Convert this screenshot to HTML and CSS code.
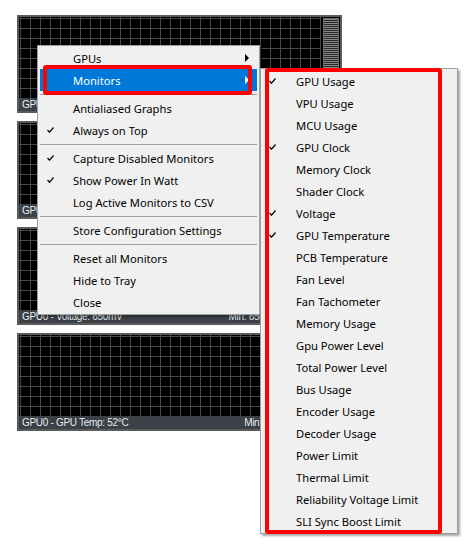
FILE: index.html
```html
<!DOCTYPE html>
<html>
<head>
<meta charset="utf-8">
<link rel="stylesheet" href="styles.css">
</head>
<body>
<div class="panels">
  <div class="panel">
    <div class="panel-body"><div class="grid"></div><div class="meter"></div></div>
    <div class="status"><span>GPU0 - GPU Usage: 0%</span><span>Min: 0%  Max: 0%</span></div>
  </div>
  <div class="panel">
    <div class="panel-body"><div class="grid"></div><div class="meter"></div></div>
    <div class="status"><span>GPU0 - GPU Clock: 300MHz</span><span>Min: 300MHz  Max: 300MHz</span></div>
  </div>
  <div class="panel">
    <div class="panel-body"><div class="grid"></div><div class="meter"></div></div>
    <div class="status"><span>GPU0 - Voltage: 650mV</span><span>Min: 650mV  Max: 650mV</span></div>
  </div>
  <div class="panel">
    <div class="panel-body"><div class="grid"></div><div class="meter"></div></div>
    <div class="status"><span>GPU0 - GPU Temp: 52°C</span><span>Min: 52°C  Max: 52°C </span></div>
  </div>
</div>

<div class="menu main-menu">
  <div class="item">GPUs<span class="arrow"></span></div>
  <div class="item active">Monitors<span class="arrow"></span></div>
  <div class="sep"></div>
  <div class="item">Antialiased Graphs</div>
  <div class="item"><svg class="check" viewBox="0 0 7 6"><path d="M0.5 3 L2.5 5.2 L6.5 0.5"/></svg>Always on Top</div>
  <div class="sep"></div>
  <div class="item"><svg class="check" viewBox="0 0 7 6"><path d="M0.5 3 L2.5 5.2 L6.5 0.5"/></svg>Capture Disabled Monitors</div>
  <div class="item"><svg class="check" viewBox="0 0 7 6"><path d="M0.5 3 L2.5 5.2 L6.5 0.5"/></svg>Show Power In Watt</div>
  <div class="item">Log Active Monitors to CSV</div>
  <div class="sep"></div>
  <div class="item">Store Configuration Settings</div>
  <div class="sep"></div>
  <div class="item">Reset all Monitors</div>
  <div class="item">Hide to Tray</div>
  <div class="item">Close</div>
</div>

<div class="menu sub-menu">
  <div class="item"><svg class="check" viewBox="0 0 7 6"><path d="M0.5 3 L2.5 5.2 L6.5 0.5"/></svg>GPU Usage</div>
  <div class="item">VPU Usage</div>
  <div class="item">MCU Usage</div>
  <div class="item"><svg class="check" viewBox="0 0 7 6"><path d="M0.5 3 L2.5 5.2 L6.5 0.5"/></svg>GPU Clock</div>
  <div class="item">Memory Clock</div>
  <div class="item">Shader Clock</div>
  <div class="item"><svg class="check" viewBox="0 0 7 6"><path d="M0.5 3 L2.5 5.2 L6.5 0.5"/></svg>Voltage</div>
  <div class="item"><svg class="check" viewBox="0 0 7 6"><path d="M0.5 3 L2.5 5.2 L6.5 0.5"/></svg>GPU Temperature</div>
  <div class="item">PCB Temperature</div>
  <div class="item">Fan Level</div>
  <div class="item">Fan Tachometer</div>
  <div class="item">Memory Usage</div>
  <div class="item">Gpu Power Level</div>
  <div class="item">Total Power Level</div>
  <div class="item">Bus Usage</div>
  <div class="item">Encoder Usage</div>
  <div class="item">Decoder Usage</div>
  <div class="item">Power Limit</div>
  <div class="item">Thermal Limit</div>
  <div class="item">Reliability Voltage Limit</div>
  <div class="item">SLI Sync Boost Limit</div>
</div>

<div class="mark mark-monitors"></div>
<div class="mark mark-sub"></div>
</body>
</html>
```

FILE: styles.css
```css
* { box-sizing: border-box; }
html, body { margin: 0; padding: 0; background: #ffffff; }
body {
  width: 467px;
  height: 553px;
  overflow: hidden;
  position: relative;
  font-family: "Noto Sans", sans-serif;
}

.panels {
  display: flex;
  flex-direction: column;
  gap: 8px;
  padding: 15px 0 0 17px;
}
.panel {
  width: 325px;
  height: 98px;
  border: 2px solid #5b5b5b;
  background: #000;
  display: flex;
  flex-direction: column;
}
.panel-body {
  flex: 1;
  display: flex;
  min-height: 0;
}
.grid {
  flex: 1;
  background-color: #000;
  background-image:
    linear-gradient(to right, #474747 1px, transparent 1px),
    linear-gradient(to bottom, #474747 1px, transparent 1px);
  background-size: 10px 10px;
  background-position: 1px 1px;
}
.meter {
  width: 16px;
  margin: 1px 1px 1px 2px;
  border: 1px solid #6a6a6a;
  background: repeating-linear-gradient(to bottom, #8a8a8a 0 1px, #262626 1px 2px);
}
.status {
  height: 13px;
  background: #3c4247;
  color: #f2f2f2;
  font-family: "Liberation Sans", Arial, sans-serif;
  font-size: 10px;
  letter-spacing: -0.3px;
  line-height: 13px;
  display: flex;
  justify-content: space-between;
  padding: 0 3px 0 3px;
  white-space: pre;
  text-shadow: 0 0 1px #1a2a3a;
}

.menu {
  position: absolute;
  background: #f0f0f0;
  border: 1px solid #a0a0a0;
  box-shadow: 2px 2px 2px rgba(0, 0, 0, 0.35);
  padding: 1px 2px;
  font-size: 11.2px;
  color: #000;
}
.main-menu { left: 37px; top: 45px; width: 223px; }
.sub-menu { left: 260px; top: 68px; width: 198px; }

.item {
  position: relative;
  height: 22px;
  line-height: 22px;
  padding-left: 33px;
  padding-top: 1px;
  white-space: nowrap;
}
.item.active { background: #0078d7; color: #fff; }
.check {
  position: absolute;
  left: 7px;
  top: 8px;
  width: 7px;
  height: 6px;
  fill: none;
  stroke: #000;
  stroke-width: 1.2;
}
.sub-menu .check { left: 6px; }
.arrow {
  position: absolute;
  right: 8px;
  top: 7px;
  width: 0;
  height: 0;
  border-left: 4px solid #000;
  border-top: 4px solid transparent;
  border-bottom: 4px solid transparent;
}
.item.active .arrow { border-left-color: #fff; }
.sep {
  height: 6px;
  display: flex;
  align-items: center;
}
.sep::before {
  content: "";
  flex: 1;
  height: 1px;
  background: #a0a0a0;
}

.mark {
  position: absolute;
  border: 4px solid #ff0000;
  border-radius: 3px;
}
.mark-monitors { left: 43px; top: 65px; width: 209px; height: 30px; }
.mark-sub { left: 265px; top: 68px; width: 177px; height: 466px; }
```
